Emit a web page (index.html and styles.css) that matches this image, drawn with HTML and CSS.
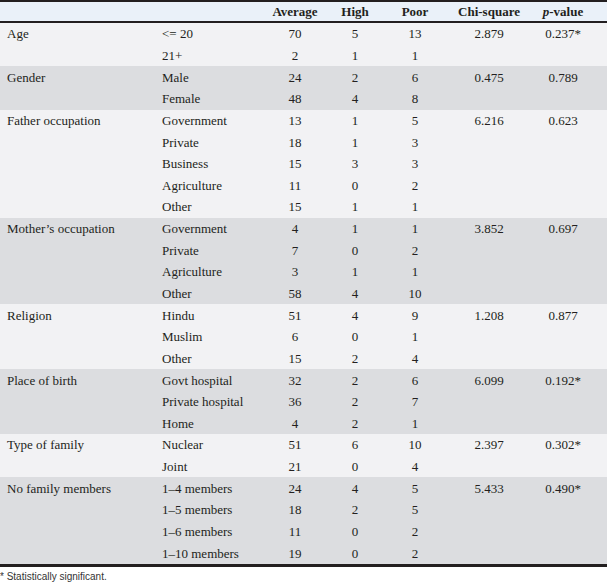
FILE: index.html
```html
<!DOCTYPE html>
<html lang="en">
<head>
<meta charset="utf-8">
<title>Survey table</title>
<link rel="stylesheet" href="styles.css">
</head>
<body>
<table class="stats">
<colgroup>
<col class="c1"><col class="c2"><col class="c3"><col class="c4"><col class="c5"><col class="c6"><col class="c7">
</colgroup>
<thead>
<tr><th></th><th></th><th>Average</th><th>High</th><th>Poor</th><th>Chi-square</th><th class="last"><i>p</i>-value</th></tr>
</thead>
<tbody class="light">
<tr><td class="lbl">Age</td><td class="cat">&lt;= 20</td><td>70</td><td>5</td><td>13</td><td>2.879</td><td class="last">0.237*</td></tr>
<tr><td></td><td class="cat">21+</td><td>2</td><td>1</td><td>1</td><td></td><td class="last"></td></tr>
</tbody>
<tbody class="dark">
<tr><td class="lbl">Gender</td><td class="cat">Male</td><td>24</td><td>2</td><td>6</td><td>0.475</td><td class="last">0.789</td></tr>
<tr><td></td><td class="cat">Female</td><td>48</td><td>4</td><td>8</td><td></td><td class="last"></td></tr>
</tbody>
<tbody class="light">
<tr><td class="lbl">Father occupation</td><td class="cat">Government</td><td>13</td><td>1</td><td>5</td><td>6.216</td><td class="last">0.623</td></tr>
<tr><td></td><td class="cat">Private</td><td>18</td><td>1</td><td>3</td><td></td><td class="last"></td></tr>
<tr><td></td><td class="cat">Business</td><td>15</td><td>3</td><td>3</td><td></td><td class="last"></td></tr>
<tr><td></td><td class="cat">Agriculture</td><td>11</td><td>0</td><td>2</td><td></td><td class="last"></td></tr>
<tr><td></td><td class="cat">Other</td><td>15</td><td>1</td><td>1</td><td></td><td class="last"></td></tr>
</tbody>
<tbody class="dark">
<tr><td class="lbl">Mother&#8217;s occupation</td><td class="cat">Government</td><td>4</td><td>1</td><td>1</td><td>3.852</td><td class="last">0.697</td></tr>
<tr><td></td><td class="cat">Private</td><td>7</td><td>0</td><td>2</td><td></td><td class="last"></td></tr>
<tr><td></td><td class="cat">Agriculture</td><td>3</td><td>1</td><td>1</td><td></td><td class="last"></td></tr>
<tr><td></td><td class="cat">Other</td><td>58</td><td>4</td><td>10</td><td></td><td class="last"></td></tr>
</tbody>
<tbody class="light">
<tr><td class="lbl">Religion</td><td class="cat">Hindu</td><td>51</td><td>4</td><td>9</td><td>1.208</td><td class="last">0.877</td></tr>
<tr><td></td><td class="cat">Muslim</td><td>6</td><td>0</td><td>1</td><td></td><td class="last"></td></tr>
<tr><td></td><td class="cat">Other</td><td>15</td><td>2</td><td>4</td><td></td><td class="last"></td></tr>
</tbody>
<tbody class="dark">
<tr><td class="lbl">Place of birth</td><td class="cat">Govt hospital</td><td>32</td><td>2</td><td>6</td><td>6.099</td><td class="last">0.192*</td></tr>
<tr><td></td><td class="cat">Private hospital</td><td>36</td><td>2</td><td>7</td><td></td><td class="last"></td></tr>
<tr><td></td><td class="cat">Home</td><td>4</td><td>2</td><td>1</td><td></td><td class="last"></td></tr>
</tbody>
<tbody class="light">
<tr><td class="lbl">Type of family</td><td class="cat">Nuclear</td><td>51</td><td>6</td><td>10</td><td>2.397</td><td class="last">0.302*</td></tr>
<tr><td></td><td class="cat">Joint</td><td>21</td><td>0</td><td>4</td><td></td><td class="last"></td></tr>
</tbody>
<tbody class="dark">
<tr><td class="lbl">No family members</td><td class="cat">1&#8211;4 members</td><td>24</td><td>4</td><td>5</td><td>5.433</td><td class="last">0.490*</td></tr>
<tr><td></td><td class="cat">1&#8211;5 members</td><td>18</td><td>2</td><td>5</td><td></td><td class="last"></td></tr>
<tr><td></td><td class="cat">1&#8211;6 members</td><td>11</td><td>0</td><td>2</td><td></td><td class="last"></td></tr>
<tr><td></td><td class="cat">1&#8211;10 members</td><td>19</td><td>0</td><td>2</td><td></td><td class="last"></td></tr>
</tbody>
</table>
<p class="note">* Statistically significant.</p>
</body>
</html>
```

FILE: styles.css
```css
body {
  margin: 0;
  padding: 0;
  color: #231f20;
  font-family: "Liberation Serif", "Times New Roman", serif !important;
}
.stats {
  width: 607px;
  border-collapse: collapse;
  table-layout: fixed;
  border-top: 2px solid #231f20;
  border-bottom: 3px solid #231f20;
  font-family: "Liberation Serif", "Times New Roman", serif !important;
}
.stats td,
.stats th {
  font-family: "Liberation Serif", "Times New Roman", serif !important;
  font-size: 13px;
  padding: 0;
  text-align: center;
  vertical-align: middle;
  white-space: nowrap;
}
.stats i {
  font-family: "Liberation Serif", "Times New Roman", serif !important;
}
.c1 { width: 155px; }
.c2 { width: 110px; }
.c3 { width: 60px; }
.c4 { width: 60px; }
.c5 { width: 60px; }
.c6 { width: 88px; }
.c7 { width: 74px; }
.stats thead tr {
  background: #eaf1f9;
  border-bottom: 2px solid #231f20;
}
.stats th {
  height: 19px;
  font-weight: bold;
  line-height: 19px;
}
.stats td {
  height: 21.65px;
  line-height: 15px;
}
.stats .last {
  padding-right: 14px;
}
.stats .lbl,
.stats .cat {
  text-align: left;
  padding-left: 7px;
}
.light tr { background: #f2f2f4; }
.dark tr { background: #dcdde0; }
.note {
  margin: 4px 0 0 0;
  font-family: "Liberation Sans", Arial, sans-serif !important;
  font-size: 10px;
  color: #333333;
  line-height: 12px;
}
```
